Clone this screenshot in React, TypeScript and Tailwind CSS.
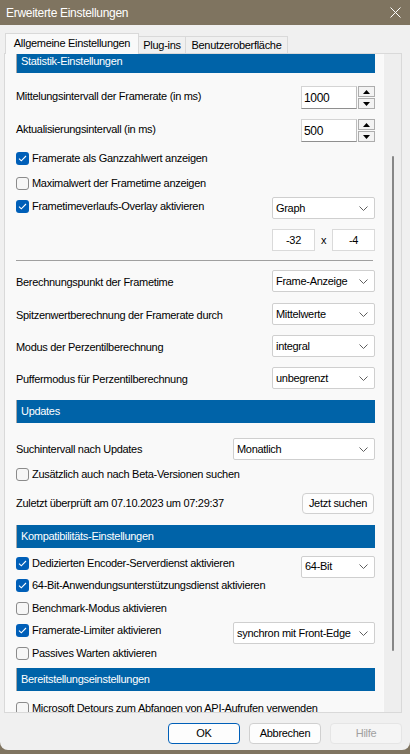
import type { ReactNode } from 'react';

// Small Windows-11 style widgets used by the settings dialog

function Chevron() {
  return (
    <svg width="9" height="5" viewBox="0 0 9 5" className="shrink-0">
      <path d="M0.5 0.5 L4.5 4.5 L8.5 0.5" fill="none" stroke="#5f5f5f" strokeWidth="1" />
    </svg>
  );
}

function Check({ checked, label }: { checked?: boolean; label: string }) {
  return (
    <div className="flex items-center whitespace-nowrap">
      {checked ? (
        <span className="flex h-[13px] w-[13px] items-center justify-center rounded-[3px] bg-[#005fb8]">
          <svg width="9" height="7" viewBox="0 0 9 7">
            <path d="M1 3.6 L3.3 5.8 L8 1" fill="none" stroke="#ffffff" strokeWidth="1.1" />
          </svg>
        </span>
      ) : (
        <span className="h-[13px] w-[13px] rounded-[3px] border border-[#8b8b8b] bg-[#f6f6f6]" />
      )}
      <span className="ml-[3px]">{label}</span>
    </div>
  );
}

function Select({ value, width }: { value: string; width: string }) {
  return (
    <div
      className={`flex h-[22px] ${width} items-center justify-between rounded-[2px] border border-[#cfcfcf] bg-white pl-[3px] pr-[6px]`}
    >
      <span className="whitespace-nowrap">{value}</span>
      <Chevron />
    </div>
  );
}

function Spin({ value }: { value: string }) {
  return (
    <div className="flex h-[23px] items-stretch">
      <div className="flex w-[56px] items-center border border-[#d4d4d4] border-b-[#8f8f8f] border-r-[#bdbdbd] bg-white pl-[2px] text-[12px]">
        {value}
      </div>
      <div className="ml-[1px] flex w-[17px] flex-col gap-[1px]">
        <div className="flex flex-1 items-center justify-center border border-[#adadad] bg-[#f3f3f3]">
          <svg width="7" height="4" viewBox="0 0 7 4">
            <path d="M0 4 L3.5 0 L7 4 Z" fill="#000" />
          </svg>
        </div>
        <div className="flex flex-1 items-center justify-center border border-[#adadad] bg-[#f3f3f3]">
          <svg width="7" height="4" viewBox="0 0 7 4">
            <path d="M0 0 L3.5 4 L7 0 Z" fill="#000" />
          </svg>
        </div>
      </div>
    </div>
  );
}

function Header({ title, className = '' }: { title: string; className?: string }) {
  return (
    <div
      className={`flex h-[23px] items-center border-l border-[#a7a7a7] bg-[#0063a8] pl-[4px] text-white ${className}`}
    >
      {title}
    </div>
  );
}

function Row({ children, className }: { children: ReactNode; className: string }) {
  return <div className={`flex items-center justify-between ${className}`}>{children}</div>;
}

export default function App() {
  return (
    <div
      className="flex h-[754px] w-[410px] flex-col bg-[#7f7460] text-[11px] tracking-[-0.3px] text-black"
      style={{ fontFamily: '"Liberation Sans", Arial, sans-serif' }}
    >
      {/* title bar */}
      <div className="flex h-[25px] items-center justify-between pl-[6px] pr-[9px] text-[12px] text-white">
        <span>Erweiterte Einstellungen</span>
        <svg width="11" height="11" viewBox="0 0 11 11">
          <path d="M0.5 0.5 L10.5 10.5 M10.5 0.5 L0.5 10.5" stroke="#ffffff" strokeWidth="1" />
        </svg>
      </div>

      <div className="flex h-[725px] flex-col rounded-b-[8px] bg-[#f0f0f0] pl-[4px] pr-[8px]">
        {/* tabs */}
        <div className="mt-[8px] flex h-[20px] items-end whitespace-nowrap pl-[1px]">
          <div className="relative z-10 -mb-px flex h-[21px] w-[134px] items-center justify-center border border-b-0 border-[#d9d9d9] bg-[#f9f9f9] pb-[1px]">
            Allgemeine Einstellungen
          </div>
          <div className="flex h-[17px] w-[47px] items-center justify-center border border-l-0 border-b-0 border-[#d9d9d9] bg-[#f0f0f0]">
            Plug-ins
          </div>
          <div className="flex h-[17px] w-[102px] items-center justify-center border border-l-0 border-b-0 border-[#d9d9d9] bg-[#f0f0f0]">
            Benutzeroberfläche
          </div>
        </div>

        {/* tab page */}
        <div className="flex h-[660px] border border-[#d9d9d9] bg-[#f9f9f9]">
          <div className="flex-1 overflow-hidden pl-[11px] pr-[8px]">
            <div className="-mt-[4px] flex flex-col">
              <Header title="Statistik-Einstellungen" />

              <Row className="mt-[13px] h-[23px]">
                <span className="-mt-[2px]">Mittelungsintervall der Framerate (in ms)</span>
                <Spin value="1000" />
              </Row>
              <Row className="mt-[10px] h-[23px]">
                <span className="-mt-[2px]">Aktualisierungsintervall (in ms)</span>
                <Spin value="500" />
              </Row>

              <Row className="mt-[6px] h-[20px]">
                <Check checked label="Framerate als Ganzzahlwert anzeigen" />
              </Row>
              <Row className="mt-[5px] h-[20px]">
                <Check label="Maximalwert der Frametime anzeigen" />
              </Row>
              <Row className="mt-[4px] h-[22px]">
                <div className="mb-[4px]">
                  <Check checked label="Frametimeverlaufs-Overlay aktivieren" />
                </div>
                <Select value="Graph" width="w-[103px]" />
              </Row>
              <div className="mt-[10px] flex h-[22px] items-center justify-end">
                <div className="flex h-[22px] w-[43px] items-center justify-center border border-[#dadada] bg-white">
                  -32
                </div>
                <span className="w-[17px] text-center">x</span>
                <div className="flex h-[22px] w-[43px] items-center justify-center border border-[#dadada] bg-white">
                  -4
                </div>
              </div>

              <div className="mt-[9px] mr-[2px] h-px bg-[#a0a0a0]" />

              <Row className="mt-[9px] h-[22px]">
                <span className="mt-[2px]">Berechnungspunkt der Frametime</span>
                <Select value="Frame-Anzeige" width="w-[103px]" />
              </Row>
              <Row className="mt-[11px] h-[22px]">
                <span className="mt-[2px]">Spitzenwertberechnung der Framerate durch</span>
                <Select value="Mittelwerte" width="w-[103px]" />
              </Row>
              <Row className="mt-[10px] h-[22px]">
                <span className="mt-[2px]">Modus der Perzentilberechnung</span>
                <Select value="integral" width="w-[103px]" />
              </Row>
              <Row className="mt-[10px] h-[22px]">
                <span className="mt-[2px]">Puffermodus für Perzentilberechnung</span>
                <Select value="unbegrenzt" width="w-[103px]" />
              </Row>

              <Header title="Updates" className="mt-[11px]" />

              <Row className="mt-[15px] h-[22px]">
                <span>Suchintervall nach Updates</span>
                <Select value="Monatlich" width="w-[142px]" />
              </Row>
              <Row className="mt-[4px] h-[20px]">
                <Check label="Zusätzlich auch nach Beta-Versionen suchen" />
              </Row>
              <Row className="mt-[8px] h-[22px]">
                <span>Zuletzt überprüft am 07.10.2023 um 07:29:37</span>
                <div className="mr-px flex h-[21px] w-[72px] items-center justify-center rounded-[4px] border border-[#d0d0d0] bg-[#fdfdfd]">
                  Jetzt suchen
                </div>
              </Row>

              <Header title="Kompatibilitäts-Einstellungen" className="mt-[11px]" />

              <Row className="mt-[8px] h-[21px]">
                <div className="mb-[6px]">
                  <Check checked label="Dedizierten Encoder-Serverdienst aktivieren" />
                </div>
                <Select value="64-Bit" width="w-[74px]" />
              </Row>
              <Row className="h-[16px]">
                <Check checked label="64-Bit-Anwendungsunterstützungsdienst aktivieren" />
              </Row>
              <Row className="mt-[7px] h-[16px]">
                <Check label="Benchmark-Modus aktivieren" />
              </Row>
              <Row className="mt-[6px] h-[22px]">
                <div className="mb-[6px]">
                  <Check checked label="Framerate-Limiter aktivieren" />
                </div>
                <Select value="synchron mit Front-Edge" width="w-[142px]" />
              </Row>
              <Row className="mt-[1px] h-[16px]">
                <Check label="Passives Warten aktivieren" />
              </Row>

              <Header title="Bereitstellungseinstellungen" className="mt-[7px]" />

              <Row className="mt-[9px] h-[16px]">
                <Check label="Microsoft Detours zum Abfangen von API-Aufrufen verwenden" />
              </Row>
            </div>
          </div>

          {/* vertical scroll bar */}
          <div className="flex w-[18px] justify-center border-l border-[#fafafa] bg-[#eeeeee]">
            <div className="mt-[102px] h-[495px] w-[2px] rounded-full bg-[#868686]" />
          </div>
        </div>

        {/* dialog buttons */}
        <div className="mt-[10px] flex justify-end gap-[9px]">
          <div className="flex h-[21px] w-[72px] items-center justify-center rounded-[4px] border border-[#005fb8] bg-[#fdfdfd]">
            OK
          </div>
          <div className="flex h-[21px] w-[72px] items-center justify-center rounded-[4px] border border-[#d0d0d0] bg-[#fdfdfd]">
            Abbrechen
          </div>
          <div className="flex h-[21px] w-[72px] items-center justify-center rounded-[4px] border border-[#e5e5e5] bg-[#f5f5f5] text-[#a0a0a0]">
            Hilfe
          </div>
        </div>
      </div>
    </div>
  );
}
